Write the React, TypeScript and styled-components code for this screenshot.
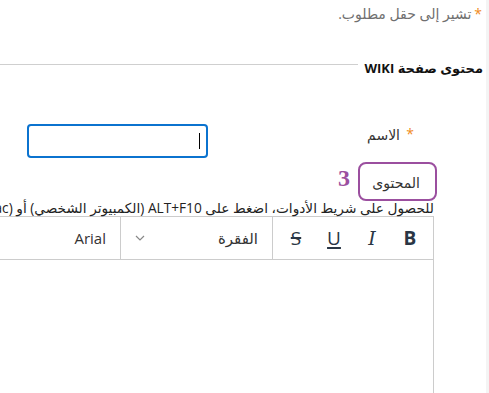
import React from "react";
import styled, { createGlobalStyle } from "styled-components";

const Global = createGlobalStyle`
  html, body { margin: 0; padding: 0; background: #fff; overflow: hidden; }
  body { font-family: "Open Sans", "DejaVu Sans", sans-serif; color: #333; }
`;

const Page = styled.div`
  display: flex;
  width: 489px;
  height: 393px;
  overflow: hidden;
`;

const Main = styled.div`
  flex: 1;
  direction: rtl;
  padding-top: 4px;
  min-width: 0;
  overflow: hidden;
`;

const Strip = styled.div`
  width: 3px;
  background: #f4f4f4;
`;

const Note = styled.div`
  font-size: 14px;
  line-height: 20px;
  color: #707070;
  padding-right: 4px;
`;

const Star = styled.span`
  color: #f08a1c;
  margin-left: 3px;
`;

const SectionHead = styled.div`
  display: flex;
  align-items: flex-start;
  margin-top: 34px;
  padding-right: 3px;
`;

const Legend = styled.div`
  font-size: 13px;
  font-weight: 700;
  line-height: 20px;
  color: #111;
  white-space: nowrap;
  padding-left: 6px;
`;

const Rule = styled.div`
  flex: 1;
  height: 1px;
  background: #cfcfcf;
  margin-top: 6px;
`;

const FieldRow = styled.div`
  display: flex;
  align-items: flex-start;
  margin-top: 46px;
  padding-right: 66px;
`;

const ReqMark = styled.span`
  width: 20px;
  text-align: center;
  color: #f08a1c;
  font-size: 14px;
  line-height: 20px;
  padding-top: 0;
`;

const Label = styled.span`
  width: 192px;
  font-size: 14px;
  line-height: 20px;
  padding-top: 1px;
  color: #333;
`;

const Input = styled.div`
  width: 177px;
  height: 30px;
  border: 2px solid #0b73cf;
  border-radius: 4px;
  position: relative;
`;

const Caret = styled.span`
  position: absolute;
  right: 6px;
  top: 7px;
  width: 1px;
  height: 16px;
  background: #000;
`;

const ContentRow = styled.div`
  display: flex;
  align-items: center;
  margin-top: 4px;
  padding-right: 49px;
  height: 39px;
`;

const Highlight = styled.div`
  width: 75px;
  height: 35px;
  border: 2px solid #9b4f9f;
  border-radius: 8px;
  box-sizing: content-box;
  font-size: 14px;
  line-height: 20px;
  display: flex;
  align-items: flex-end;
  justify-content: flex-start;
`;

const HighlightText = styled.span`
  padding-right: 15px;
  padding-bottom: 6px;
`;

const Step = styled.span`
  font-family: "Liberation Serif", serif;
  font-weight: 700;
  font-size: 24px;
  color: #9b4f9f;
  margin-right: 8px;
  margin-top: -6px;
`;

const Area = styled.div`
  padding-right: 52px;
`;

const Help = styled.div`
  font-size: 13.7px;
  line-height: 16px;
  white-space: nowrap;
  color: #222;
  margin-top: -1px;
`;

const Editor = styled.div`
  width: 700px;
  border: 1px solid #cccccc;
  height: 300px;
`;

const Toolbar = styled.div`
  display: flex;
  height: 42px;
  border-bottom: 1px solid #cccccc;
`;

const Group = styled.div`
  display: flex;
  align-items: center;
  padding: 0 4px;
  border-left: 1px solid #cccccc;
`;

const ToolButton = styled.span<{ $kind?: string }>`
  width: 38px;
  text-align: center;
  font-size: 19px;
  color: #2a3645;
  font-family: ${(p) => (p.$kind === "i" ? '"DejaVu Serif", serif' : '"Open Sans", "DejaVu Sans", sans-serif')};
  font-weight: ${(p) => (p.$kind === "b" ? 700 : 400)};
  font-style: ${(p) => (p.$kind === "i" ? "italic" : "normal")};
  text-decoration: ${(p) =>
    p.$kind === "u" ? "underline" : p.$kind === "s" ? "line-through" : "none"};
  text-decoration-thickness: 2px;
  text-underline-offset: 2px;
`;

const Select = styled.div<{ $w: number }>`
  width: ${(p) => p.$w}px;
  display: flex;
  align-items: center;
  justify-content: space-between;
  padding: 0 14px;
  box-sizing: border-box;
  font-size: 15px;
  color: #333;
  border-left: 1px solid #cccccc;
`;

const Chevron = () => (
  <svg width="10" height="6" viewBox="0 0 10 6" fill="none">
    <path d="M1 1l4 4 4-4" stroke="#888" strokeWidth="1.2" />
  </svg>
);

export default function App() {
  return (
    <Page>
      <Global />
      <Main>
        <Note>
          <Star>*</Star>تشير إلى حقل مطلوب.
        </Note>
        <SectionHead>
          <Legend>محتوى صفحة WIKI</Legend>
          <Rule />
        </SectionHead>
        <FieldRow>
          <ReqMark>*</ReqMark>
          <Label>الاسم</Label>
          <Input>
            <Caret />
          </Input>
        </FieldRow>
        <ContentRow>
          <Highlight>
            <HighlightText>المحتوى</HighlightText>
          </Highlight>
          <Step>3</Step>
        </ContentRow>
        <Area>
          <Help>
            للحصول على شريط الأدوات، اضغط على ALT+F10 (الكمبيوتر الشخصي) أو ALT+FN+F10 (Mac).
          </Help>
          <Editor>
            <Toolbar>
              <Group>
                <ToolButton $kind="b">B</ToolButton>
                <ToolButton $kind="i">I</ToolButton>
                <ToolButton $kind="u">U</ToolButton>
                <ToolButton $kind="s">S</ToolButton>
              </Group>
              <Select $w={152}>
                <span>الفقرة</span>
                <Chevron />
              </Select>
              <Select $w={200}>
                <span>Arial</span>
              </Select>
            </Toolbar>
          </Editor>
        </Area>
      </Main>
      <Strip />
    </Page>
  );
}
